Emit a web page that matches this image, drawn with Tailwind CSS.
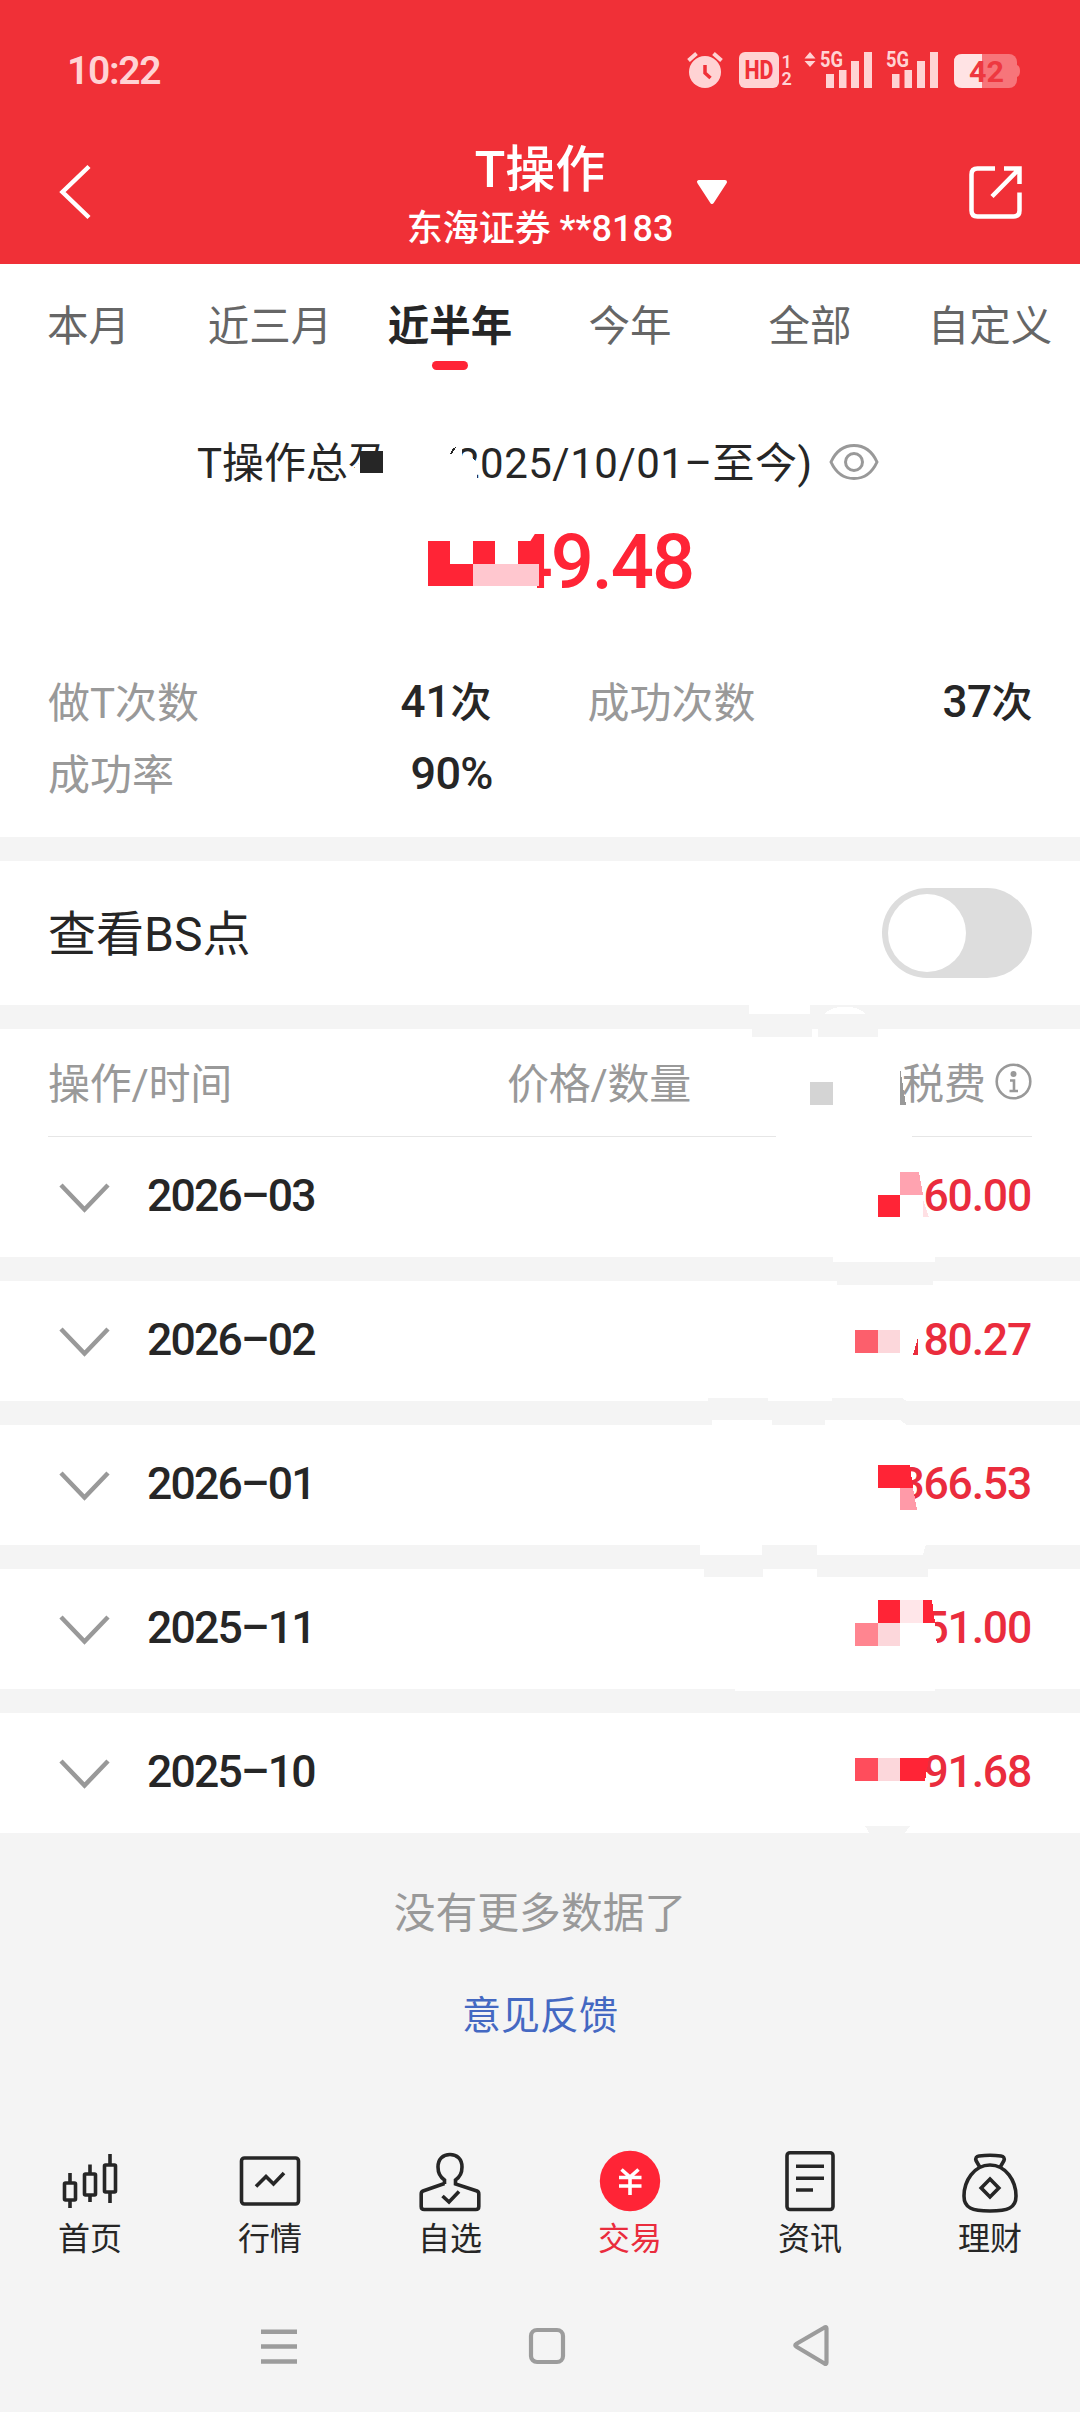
<!DOCTYPE html>
<html lang="zh-CN">
<head>
<meta charset="utf-8">
<meta name="viewport" content="width=1080">
<title>T操作</title>
<script src="https://cdn.jsdelivr.net/npm/@tailwindcss/browser@4"></script>
</head>
<body class="bg-[#f4f4f4]">
<div class="relative w-[1080px] h-[2412px] flex flex-col overflow-hidden bg-[#f4f4f4] text-[#262626] font-['Roboto','Noto_Sans_CJK_SC',sans-serif] whitespace-nowrap">

  <!-- Header -->
  <header class="h-[264px] shrink-0 bg-[#f03037] text-white flex flex-col">
    <div class="h-[142px] flex items-center justify-between pl-[67px] pr-[60px] text-[#ffd3d4]">
      <span class="text-[39px] leading-none font-semibold tracking-[-1.3px]">10:22</span>
      <svg class="mb-[4px] w-[333px] h-[58px]" viewBox="687 40 333 58" fill="#ffd3d4">
        <circle cx="705" cy="72" r="16"/>
        <path d="M688.500 60.500l8-7M721.500 60.500l-8-7" stroke="#ffd3d4" stroke-width="4"/>
        <path d="M705 65v8l5.500 5" fill="none" stroke="#f03037" stroke-width="3.500"/>
        <rect x="739" y="52" width="40" height="36" rx="6"/>
        <text x="759" y="79" text-anchor="middle" font-size="25" font-weight="800" textLength="29" lengthAdjust="spacingAndGlyphs" fill="#f03037">HD</text>
        <text x="781.500" y="68" font-size="18" font-weight="600">1</text>
        <text x="781.500" y="85" font-size="18" font-weight="600">2</text>
        <path d="M804.500 58.500l5.500-6.500 5.500 6.500zM804.500 61l5.500 6 5.500-6z"/>
        <text x="820" y="67" font-size="22" font-weight="700" textLength="23" lengthAdjust="spacingAndGlyphs">5G</text>
        <path d="M826 74h8v14h-8zM839 70h7.500v18H839zM851 61h8v27h-8zM864 52h8v36h-8z"/>
        <text x="886" y="67" font-size="22" font-weight="700" textLength="23" lengthAdjust="spacingAndGlyphs">5G</text>
        <path d="M892 74h7.500v14H892zM904.500 70h7.500v18h-7.500zM917 61h8v27h-8zM930 52h8v36h-8z"/>
        <rect x="954" y="54" width="63" height="34" rx="8" fill="#f7757a"/>
        <path d="M1017 65q3 1 3 6t-3 6z" fill="#f7757a"/>
        <path d="M982 54h-20q-8 0-8 8v18q0 8 8 8h20z" fill="#ffe3e4"/>
        <text x="969" y="82" font-size="30" font-weight="700" textLength="35" lengthAdjust="spacingAndGlyphs" fill="#ee3840">42</text>
      </svg>
    </div>
    <div class="h-[122px] grid grid-cols-[300px_1fr_300px]">
      <div class="pl-[58px] pt-[21px]">
        <svg class="w-[34px] h-[58px]" viewBox="0 0 34 58" fill="none" stroke="#fff" stroke-width="4.500"><path d="M31 3.500 4.500 29 31 54.500"/></svg>
      </div>
      <div class="relative flex flex-col items-center">
        <h1 class="h-[54px] leading-[56px] text-[50px] font-medium">T操作</h1>
        <p class="h-[62px] leading-[67px] text-[36px] font-medium">东海证券 **8183</p>
        <svg class="absolute left-[396px] top-[37px] w-[32px] h-[26px]" viewBox="0 0 32 26"><path d="M3 3h26L16 23z" fill="#fff" stroke="#fff" stroke-width="4" stroke-linejoin="round"/></svg>
      </div>
      <div class="flex justify-end pr-[56px] pt-[22px]">
        <svg class="w-[56px] h-[56px]" viewBox="0 0 56 56" fill="none" stroke="#fff" stroke-width="4.500"><path d="M27 4.500H9.500q-6 0-6 6v36q0 6 6 6h36q6 0 6-6V28.500M36 4.500h15.500V20M50.500 5.500 24 32.500"/></svg>
      </div>
    </div>
  </header>

  <!-- Period tabs -->
  <nav class="h-[120px] shrink-0 bg-white grid grid-cols-6 text-[41.500px] text-[#666]">
    <div class="flex justify-center pt-[32px] pr-[3px] leading-[62px]">本月</div>
    <div class="flex justify-center pt-[32px] leading-[62px]">近三月</div>
    <div class="flex flex-col items-center pt-[32px] leading-[62px] font-bold text-[#262626]">近半年<i class="mt-[3px] w-[36px] h-[9px] rounded-full bg-[#ff2436]"></i></div>
    <div class="flex justify-center pt-[32px] leading-[62px]">今年</div>
    <div class="flex justify-center pt-[32px] leading-[62px]">全部</div>
    <div class="flex justify-center pt-[32px] leading-[62px]">自定义</div>
  </nav>

  <!-- Summary -->
  <section class="h-[453px] shrink-0 bg-white flex flex-col">
    <div class="h-[158px] pl-[197px] flex items-center text-[42px]">
      <span>T操作总盈亏</span>
      <span class="pl-[9px] tracking-[0.5px]">(2025/10/01–至今)</span>
      <svg class="ml-[16px] mb-[2px] w-[50px] h-[38px]" viewBox="0 0 50 38" fill="none" stroke="#999" stroke-width="3"><path d="M2 19C7 8 15 2.500 25 2.500S43 8 48 19C43 30 35 35.500 25 35.500S7 30 2 19z"/><circle cx="25" cy="19" r="8.500"/></svg>
    </div>
    <div class="h-[36px] flex items-center justify-end pt-[4px] pr-[387px] text-[76px] font-medium tracking-[-2.100px] text-[#ff2436]">49.48</div>
    <div class="pt-[88px] px-[48px] grid grid-cols-2 gap-x-[95px] text-[42px]">
      <div class="h-[72px] flex items-center justify-between"><span class="pt-[2px] text-[#999]">做T次数</span><b class="pr-[1px] font-medium text-[44px]">41<span class="text-[41px]">次</span></b></div>
      <div class="h-[72px] flex items-center justify-between"><span class="pt-[2px] text-[#999]">成功次数</span><b class="font-medium text-[44px] tracking-[-0.500px]">37<span class="text-[41px]">次</span></b></div>
      <div class="h-[72px] flex items-center justify-between"><span class="pt-[2px] text-[#999]">成功率</span><b class="font-medium text-[45px] tracking-[-0.800px]">90%</b></div>
    </div>
  </section>

  <!-- BS toggle -->
  <section class="mt-[24px] h-[144px] shrink-0 bg-white px-[48px] flex items-center justify-between">
    <span class="pt-[4px] text-[48px]">查看BS点</span>
    <div class="w-[150px] h-[90px] rounded-full bg-[#ddd] p-[6px]"><div class="size-[78px] rounded-full bg-white"></div></div>
  </section>

  <!-- Monthly list -->
  <section class="mt-[24px] shrink-0 flex flex-col gap-[24px]">
    <div class="bg-white">
      <div class="mx-[48px] h-[108px] border-b-[1.500px] border-[#e6e6e6] flex items-center text-[42px] text-[#999]">
        <span class="w-[459px] pt-[3px] tracking-[-0.300px]">操作/时间</span>
        <span class="flex-1 pt-[3px] tracking-[-0.300px]">价格/数量</span>
        <span class="pt-[3px]">税费</span>
        <svg class="ml-[9px] mb-[2px] w-[37px] h-[37px]" viewBox="0 0 37 37" fill="none" stroke="#999" stroke-width="2.600"><circle cx="18.500" cy="18.500" r="16.800"/><circle cx="18.500" cy="11" r="3" fill="#999" stroke="none"/><path d="M15 17.500h4v10M14.500 28h8.500" /></svg>
      </div>
      <div class="h-[120px] px-[49px] pb-[2px] flex items-center text-[44.500px] font-medium">
        <svg class="ml-[9px] mt-[4px] w-[54px] h-[32px]" viewBox="0 0 54 32" fill="none" stroke="#999" stroke-width="4.500"><path d="M3 3l23.500 24.500 23.500-24.500"/></svg>
        <span class="ml-[35px] tracking-[-1.800px]">2026–03</span><span class="ml-auto tracking-[-1.200px] text-[#ea2c3d]">60.00</span>
      </div>
    </div>
    <div class="bg-white h-[120px] px-[49px] pb-[2px] flex items-center text-[44.500px] font-medium">
      <svg class="ml-[9px] mt-[4px] w-[54px] h-[32px]" viewBox="0 0 54 32" fill="none" stroke="#999" stroke-width="4.500"><path d="M3 3l23.500 24.500 23.500-24.500"/></svg>
      <span class="ml-[35px] tracking-[-1.800px]">2026–02</span><span class="ml-auto tracking-[-1.200px] text-[#ea2c3d]">80.27</span>
    </div>
    <div class="bg-white h-[120px] px-[49px] pb-[2px] flex items-center text-[44.500px] font-medium">
      <svg class="ml-[9px] mt-[4px] w-[54px] h-[32px]" viewBox="0 0 54 32" fill="none" stroke="#999" stroke-width="4.500"><path d="M3 3l23.500 24.500 23.500-24.500"/></svg>
      <span class="ml-[35px] tracking-[-1.800px]">2026–01</span><span class="ml-auto tracking-[-1.200px] text-[#ea2c3d]">366.53</span>
    </div>
    <div class="bg-white h-[120px] px-[49px] pb-[2px] flex items-center text-[44.500px] font-medium">
      <svg class="ml-[9px] mt-[4px] w-[54px] h-[32px]" viewBox="0 0 54 32" fill="none" stroke="#999" stroke-width="4.500"><path d="M3 3l23.500 24.500 23.500-24.500"/></svg>
      <span class="ml-[35px] tracking-[-1.800px]">2025–11</span><span class="ml-auto tracking-[-1.200px] text-[#ea2c3d]">51.00</span>
    </div>
    <div class="bg-white h-[120px] px-[49px] pb-[2px] flex items-center text-[44.500px] font-medium">
      <svg class="ml-[9px] mt-[4px] w-[54px] h-[32px]" viewBox="0 0 54 32" fill="none" stroke="#999" stroke-width="4.500"><path d="M3 3l23.500 24.500 23.500-24.500"/></svg>
      <span class="ml-[35px] tracking-[-1.800px]">2025–10</span><span class="ml-auto tracking-[-1.200px] text-[#ea2c3d]">91.68</span>
    </div>
  </section>

  <div class="h-[307px] shrink-0 flex flex-col items-center">
    <p class="mt-[50px] h-[62px] leading-[62px] text-[41.800px] text-[#999]">没有更多数据了</p>
    <a class="mt-[42px] h-[58px] leading-[58px] text-[39px] text-[#4468c2]">意见反馈</a>
  </div>

  <!-- Bottom navigation -->
  <nav class="h-[140px] shrink-0 grid grid-cols-6 text-[32px]">
    <div class="flex flex-col items-center">
      <svg class="mt-[6px] w-[70px] h-[70px]" viewBox="55 2146 70 70" fill="none" stroke="#262626" stroke-width="3.600"><rect x="64.500" y="2183" width="11" height="17" rx="1"/><path d="M70 2173v10M70 2200v8M90 2164.500v9M90 2195v7M110 2154v11M110 2192v11"/><rect x="84.500" y="2174" width="11" height="21" rx="1"/><rect x="104.500" y="2165" width="11" height="27" rx="1"/></svg>
      <span class="leading-[47px]">首页</span>
    </div>
    <div class="flex flex-col items-center">
      <svg class="mt-[6px] w-[70px] h-[70px]" viewBox="235 2146 70 70" fill="none" stroke="#262626" stroke-width="3.600"><rect x="241.500" y="2158" width="57" height="46" rx="3"/><path d="M256 2186.500l10-10 7.500 7.500 10.500-11"/></svg>
      <span class="leading-[47px]">行情</span>
    </div>
    <div class="flex flex-col items-center">
      <svg class="mt-[6px] w-[70px] h-[70px]" viewBox="415 2146 70 70" fill="none" stroke="#262626" stroke-width="3.600"><path d="M444.500 2184v-4C440 2177 438 2173 438 2167 438 2159 443 2154.500 450 2154.500S462 2159 462 2167C462 2173 460 2177 455.500 2180v4L477 2191q1.800.7 1.800 3v12.500q0 3-3 3H424.200q-3 0-3-3V2194q0-2.300 1.800-3L444.500 2183.500"/><path d="M442.500 2196l6.500 6 10-10.500"/></svg>
      <span class="leading-[47px]">自选</span>
    </div>
    <div class="flex flex-col items-center text-[#ea2c3d]">
      <svg class="mt-[6px] w-[70px] h-[70px]" viewBox="595 2146 70 70" fill="none" stroke="#fff" stroke-width="3.600"><circle cx="630" cy="2181" r="30.200" fill="#ff2436" stroke="none"/><path d="M621.500 2169.500l8.500 7.500 8.500-7.500M619 2177.500h22.500M619 2186h22.500M630 2177v18"/></svg>
      <span class="leading-[47px]">交易</span>
    </div>
    <div class="flex flex-col items-center">
      <svg class="mt-[6px] w-[70px] h-[70px]" viewBox="775 2146 70 70" fill="none" stroke="#262626" stroke-width="3.600"><rect x="787" y="2152.700" width="46" height="56.800" rx="3"/><path d="M796 2166.300h28M796 2178.300h28M796 2190h17"/></svg>
      <span class="leading-[47px]">资讯</span>
    </div>
    <div class="flex flex-col items-center">
      <svg class="mt-[6px] w-[70px] h-[70px]" viewBox="955 2146 70 70" fill="none" stroke="#262626" stroke-width="3.600"><path d="M980 2167.500L976 2160.500Q975 2156.500 979 2156 990 2154.500 1001 2156 1005 2156.500 1004 2160.500L1000 2167.500"/><path d="M990 2165C974 2165 964 2181 964 2196 964 2208 972 2211 990 2211S1016 2208 1016 2196C1016 2181 1006 2165 990 2165z"/><path d="M990 2179l8.800 9-8.800 9-8.800-9z"/></svg>
      <span class="leading-[47px]">理财</span>
    </div>
  </nav>

  <!-- System navigation -->
  <div class="h-[132px] shrink-0 flex pl-[261px] pt-[44px]">
    <svg class="w-[36px] h-[44px]" viewBox="0 0 36 44" stroke="#9c9c9c" stroke-width="4.600"><path d="M0 7.700h36M0 22.500h36M0 37.500h36"/></svg>
    <svg class="ml-[231px] w-[38px] h-[44px]" viewBox="0 0 38 44" fill="none" stroke="#9c9c9c" stroke-width="4.200"><rect x="3" y="6" width="32" height="32" rx="6"/></svg>
    <svg class="ml-[226px] w-[38px] h-[44px]" viewBox="0 0 38 44" fill="none" stroke="#9c9c9c" stroke-width="4.200" stroke-linejoin="round"><path d="M34.500 4.500q0-2-2-1L4.500 19.800q-2.500 1.500 0 3L32.500 39.500q2 1 2-1z"/></svg>
  </div>

  <!-- Privacy mosaic laid over the figures -->
  <svg class="absolute inset-0 w-[1080px] h-[2412px] pointer-events-none" viewBox="0 0 1080 2412" shape-rendering="crispEdges">
    <g fill="#fff">
      <path d="M349 474L366 456H383V436H450V492H349zM349 453h9l-9 8zM440 450h20v41h-20zM450 436h12v20h9l6 7v28h-27zM450 449h12v42h-12z" fill-rule="nonzero"/>
      <path d="M490 525h42l-3 16h8v54h-47z"/>
      <path d="M776 1134h136v4H776z"/>
      <path d="M749 1004h61v10h-61zM825 1014q4-7 20-7t20 7zM833 1256h102v6H833zM712 1420h60v6h-60zM825 1420h75l8 6h-83zM700 1544h62v11h-62zM817 1544h109l-3 11H817zM735 1688h200v3H735z"/>
    </g>
    <g fill="#f4f4f4">
      <path d="M752 1028h60v9h-60zM818 1028h60v9h-60zM837 1280h96v5h-96zM708 1398h60v4h-60zM832 1398h70l6 4h-76zM704 1568h59v9h-59zM817 1568h111v9H817zM865 1826h45l-6 8h-34z"/>
    </g>
    <path d="M450 454l3-6 3-1-4 7z" fill="#262626"/>
    <path d="M360 451h23v22h-23z" fill="#262626"/>
    <g fill="#ff2436">
      <path d="M428 541h22v23h23v22h-45zM473 541h22v23h-22zM518 541h20v23h-20z"/>
      <path d="M878 1195h22v22h-22zM878 1465h32l3 23h-35zM878 1600h22v23h-22zM923 1600h9l3 23h-12zM900 1758h29l-4 23h-25z"/>
    </g>
    <path d="M473 564h66v22h-66z" fill="#ffc7cf"/>
    <path d="M810 1082h23v23h-23z" fill="#d4d4d4"/>
    <path d="M900 1068l6 37h-6z" fill="#999"/>
    <path d="M900 1172h19l4 23h-23z" fill="#ffa3b0"/>
    <path d="M923 1199l6 18h-6z" fill="#ffe0e4"/>
    <path d="M855 1330h23v23h-23z" fill="#fc5f6c"/>
    <path d="M917.500 1339v16H913z" fill="#ea2c3d"/>
    <path d="M900 1488h13l4 22h-17z" fill="#ff9aa8"/>
    <path d="M900 1600h23v23h-23z" fill="#ffe6e9"/>
    <path d="M855 1623h23v23h-23z" fill="#ff8590"/>
    <path d="M923 1623h12l2 24h-14z" fill="#fff"/>
    <path d="M855 1758h23v23h-23z" fill="#ff4d5c"/>
    <path d="M878 1330h22v23h-22zM878 1623h22v23h-22zM878 1758h22v23h-22z" fill="#fcd7db"/>
  </svg>
</div>
</body>
</html>
